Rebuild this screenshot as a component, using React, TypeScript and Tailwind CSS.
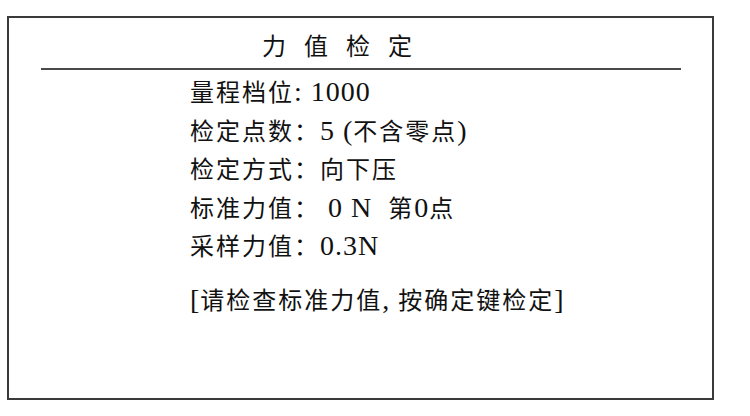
// Latin text on this panel is drawn larger than the Chinese, so each line is split into runs.
function Line({ text, className = "" }: { text: string; className?: string }) {
  const runs = text.match(/[\x00-\x7F]+|[^\x00-\x7F]+/g) ?? [];
  return (
    <div className={`h-[38.5px] leading-[38.5px] whitespace-pre ${className}`}>
      {runs.map((run, i) =>
        /^[\x00-\x7F]+$/.test(run) ? (
          <span key={i} className="text-[28px] leading-none tracking-[1px] font-['Liberation_Serif',serif]">
            {run}
          </span>
        ) : (
          <span key={i} className="text-[24px] leading-none tracking-[2px] font-['Noto_Sans_CJK_SC',sans-serif]">
            {run}
          </span>
        )
      )}
    </div>
  );
}

export default function App() {
  const rows = [
    "量程档位: 1000",
    "检定点数：5 (不含零点)",
    "检定方式：向下压",
    "标准力值： 0 N  第0点",
    "采样力值：0.3N",
  ];

  return (
    <div className="w-[750px] h-[416px] bg-white pt-[16px] pl-[7px] font-['Liberation_Serif','Noto_Sans_CJK_SC',serif] text-[#111]">
      <div className="w-[707px] h-[384px] border-2 border-[#3a3a3a] flex flex-col">
        <div className="pl-[253px] pt-[14px] h-[50px] text-[24px] leading-[30px] tracking-[6px]">
          力 值 检 定
        </div>
        <div className="ml-[32px] w-[640px] h-[2px] bg-[#4a4a4a]" />
        <div className="pl-[181px] pt-[7px] flex flex-col">
          {rows.map((r) => (
            <Line key={r} text={r} />
          ))}
          <Line text="[请检查标准力值, 按确定键检定]" className="mt-[15px]" />
        </div>
      </div>
    </div>
  );
}
